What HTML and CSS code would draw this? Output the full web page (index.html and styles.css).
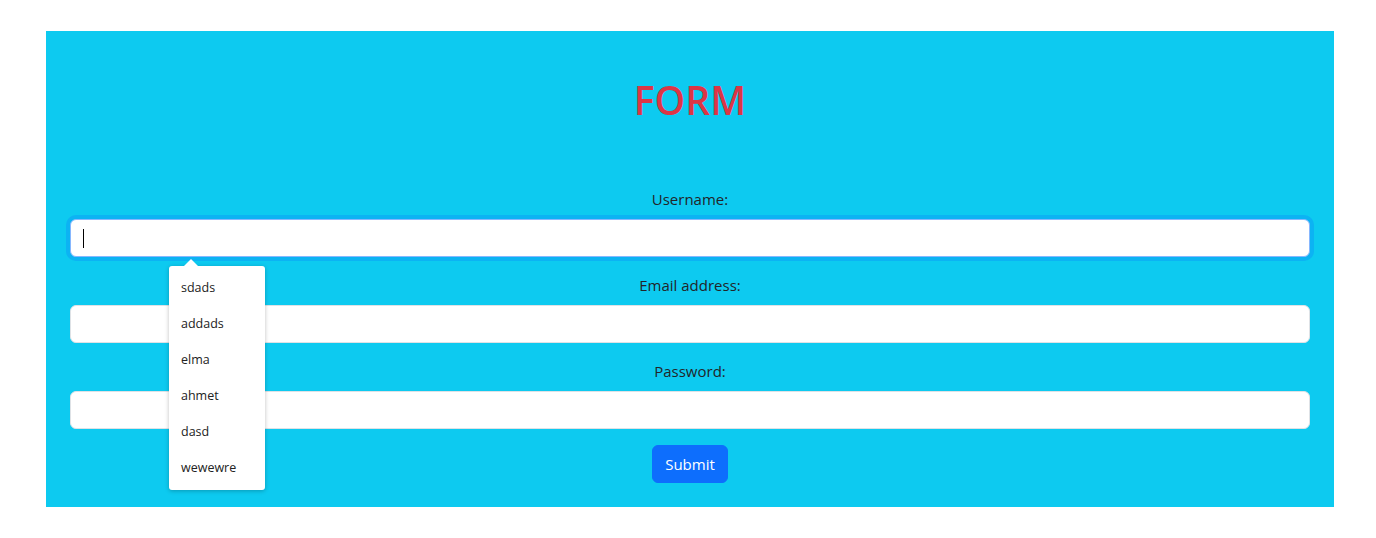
FILE: index.html
```html
<!DOCTYPE html>
<html>
<head>
<meta charset="utf-8">
<link rel="stylesheet" href="styles.css">
</head>
<body>
<div class="panel">
  <h1 class="title">FORM</h1>
  <form class="form">
    <div class="field">
      <label class="label">Username:</label>
      <div class="input-wrap">
        <div class="input focused"><span class="caret"></span></div>
        <div class="suggest">
          <div class="suggest-arrow"></div>
          <div class="suggest-item">sdads</div>
          <div class="suggest-item">addads</div>
          <div class="suggest-item">elma</div>
          <div class="suggest-item">ahmet</div>
          <div class="suggest-item">dasd</div>
          <div class="suggest-item">wewewre</div>
        </div>
      </div>
    </div>
    <div class="field">
      <label class="label">Email address:</label>
      <div class="input"></div>
    </div>
    <div class="field field-last">
      <label class="label">Password:</label>
      <div class="input"></div>
    </div>
    <div class="actions">
      <button type="button" class="btn">Submit</button>
    </div>
  </form>
</div>
</body>
</html>
```

FILE: styles.css
```css
* { box-sizing: border-box; }
html, body { margin: 0; padding: 0; background: #fff; }
body {
  font-family: "Open Sans", "Noto Sans", "Liberation Sans", sans-serif;
  color: #212529;
  padding: 31px 42px 31px 46px;
}
.panel {
  background: #0dcaf0;
  padding: 45px 24px 24px;
  height: 476px;
}
.title {
  margin: 0 0 64px;
  text-align: center;
  color: #dc3545;
  font-size: 39px;
  font-weight: 600;
  line-height: 48px;
}
.form { display: flex; flex-direction: column; }
.field { display: flex; flex-direction: column; margin-bottom: 17px; }
.field-last { margin-bottom: 16px; }
.label {
  text-align: center;
  font-size: 15px;
  line-height: 23px;
  margin-bottom: 8px;
}
.input-wrap { position: relative; }
.input {
  height: 38px;
  background: #fff;
  border: 1px solid #dee2e6;
  border-radius: 6px;
}
.input.focused {
  border-color: #86b7fe;
  box-shadow: 0 0 0 4px rgba(13, 110, 253, 0.25);
  position: relative;
}
.caret {
  position: absolute;
  left: 12px;
  top: 9px;
  width: 1px;
  height: 19px;
  background: #000;
}
.suggest {
  position: absolute;
  left: 99px;
  top: 47px;
  width: 96px;
  background: #fff;
  border-radius: 3px;
  box-shadow: 0 1px 4px rgba(0,0,0,0.25);
  padding: 4px 0;
  z-index: 2;
}
.suggest-arrow {
  position: absolute;
  left: 14px;
  top: -7px;
  width: 0; height: 0;
  border-left: 8px solid transparent;
  border-right: 8px solid transparent;
  border-bottom: 8px solid #fff;
}
.suggest-item {
  height: 36px;
  line-height: 36px;
  padding-left: 12px;
  font-size: 12.5px;
  color: #222;
}
.actions { display: flex; justify-content: center; }
.btn {
  height: 38px;
  padding: 0 12px;
  background: #0d6efd;
  border: 1px solid #0d6efd;
  color: #fff;
  border-radius: 6px;
  font-family: inherit;
  font-size: 15px;
}
```
